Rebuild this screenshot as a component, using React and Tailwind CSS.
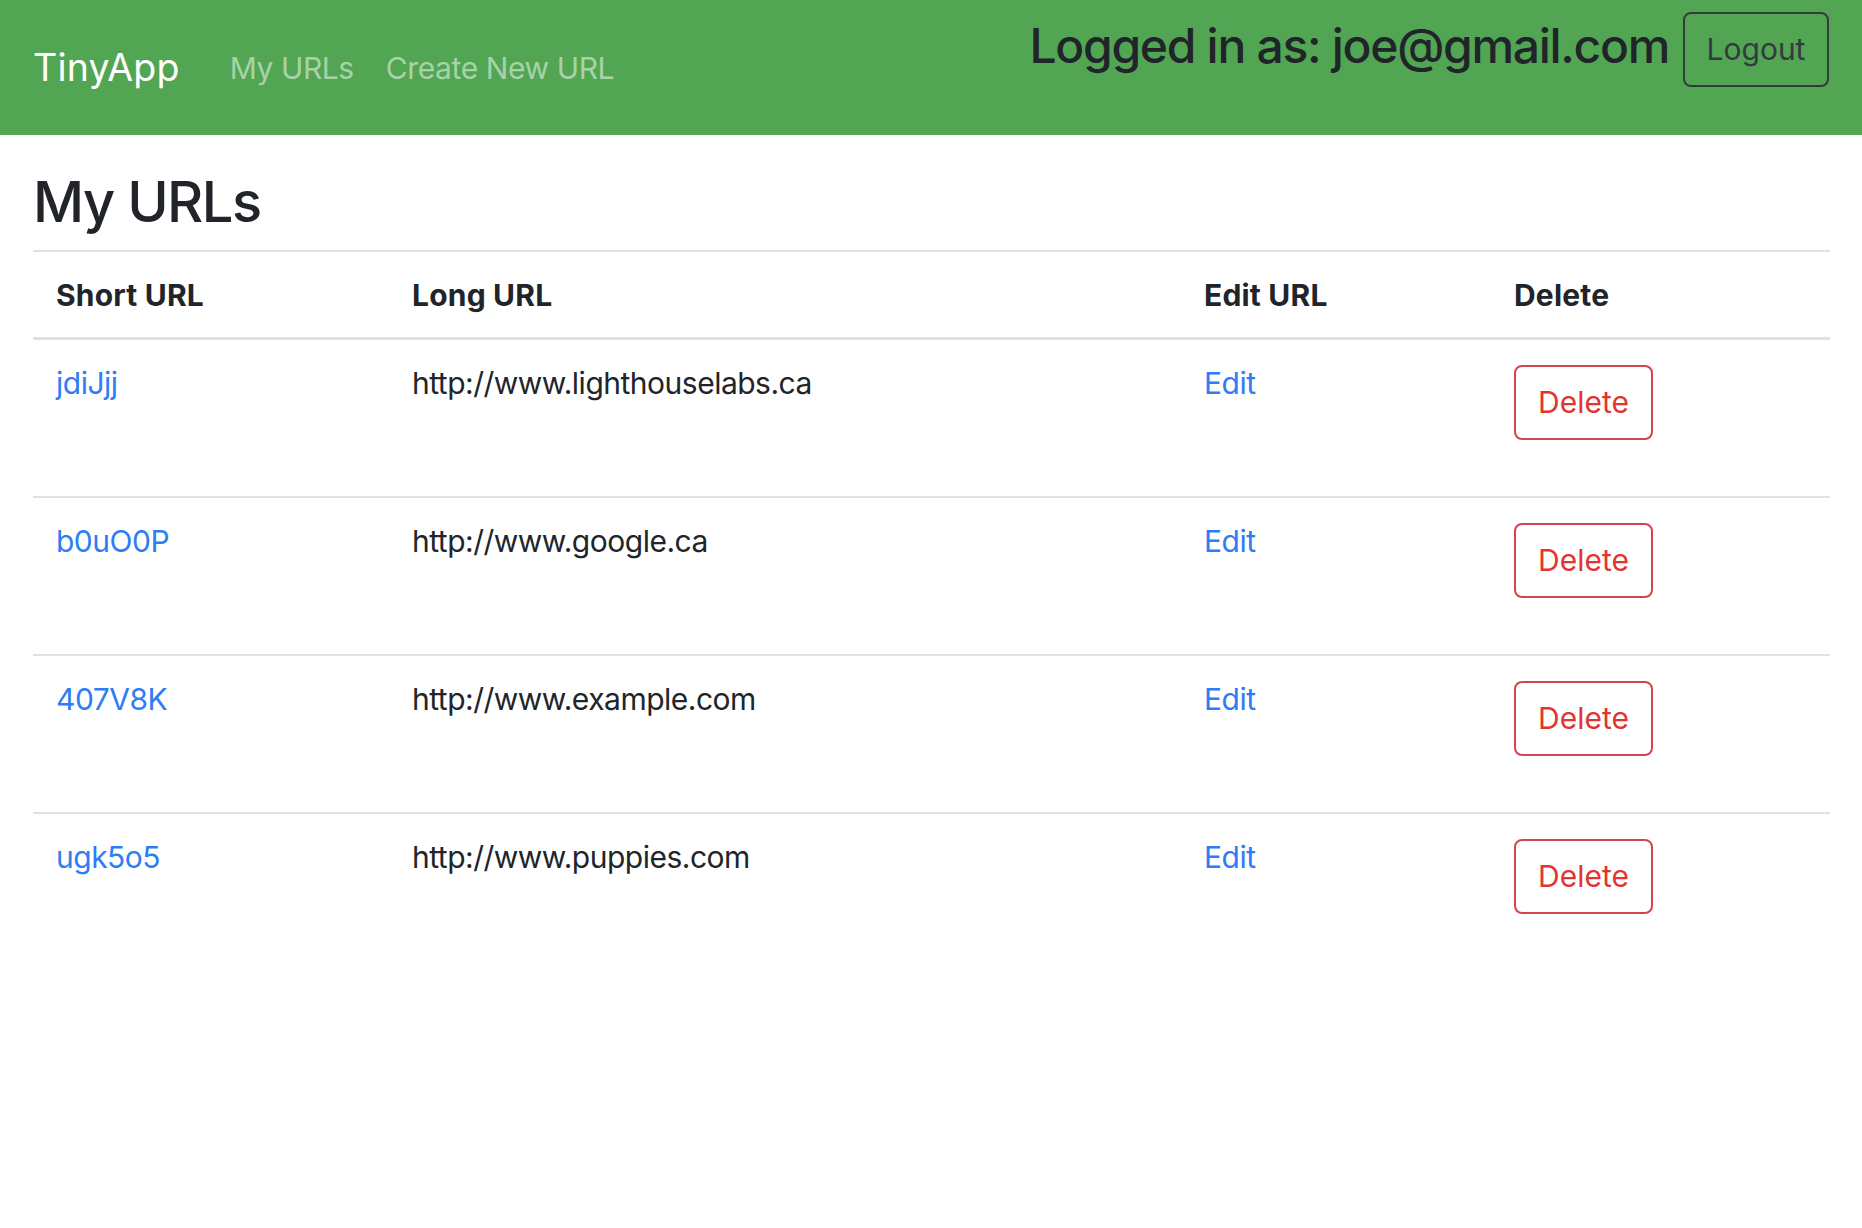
import React from "react";

const rows = [
  { id: "jdiJjj", url: "http://www.lighthouselabs.ca" },
  { id: "b0uO0P", url: "http://www.google.ca" },
  { id: "407V8K", url: "http://www.example.com" },
  { id: "ugk5o5", url: "http://www.puppies.com" },
];

export default function App() {
  return (
    <div
      className="min-h-[1228px] w-[1862px] bg-white text-[#212529]"
      style={{ fontFamily: "Inter, 'Noto Sans', sans-serif" }}
    >
      <nav className="flex h-[135px] items-center bg-[#52a552] pl-[33px] pr-[33px]">
        <a className="text-[37.5px] leading-none tracking-[0.2px] text-white">TinyApp</a>
        <div className="ml-[50px] flex items-center gap-[32px] text-[30px] leading-none tracking-[-0.4px] text-[#a8d3a8]">
          <a>My URLs</a>
          <a>Create New URL</a>
        </div>
        <div className="ml-auto flex items-start gap-[14px] self-start pt-[12px]">
          <h3 className="mt-[5px] text-[48px] font-medium leading-[1.2] tracking-[-1.3px] text-[#212529]">
            Logged in as: joe@gmail.com
          </h3>
          <button className="flex h-[75px] w-[146px] items-center justify-center rounded-[8px] border-2 border-[#343a40] text-[30px] text-[#343a40]">
            Logout
          </button>
        </div>
      </nav>

      <main className="pl-[33px] pr-[32px]">
        <h1 className="pt-[34px] text-[56px] font-medium leading-[1.2] tracking-[-1.5px]">My URLs</h1>
        <div className="mt-[14px] w-[1797px] text-[30px] leading-[1.5]">
          <div className="grid h-[90px] grid-cols-[356px_792px_310px_1fr] items-center border-t-2 border-b-[3px] border-[#dee2e6] pt-[1px] font-bold">
            <div className="pl-[23px] tracking-[0.2px]">Short URL</div>
            <div className="pl-[23px] tracking-[0.2px]">Long URL</div>
            <div className="pl-[23px] tracking-[0.2px]">Edit URL</div>
            <div className="pl-[23px] tracking-[0.2px]">Delete</div>
          </div>
          {rows.map((r, i) => (
            <div
              key={r.id}
              className={
                "grid grid-cols-[356px_792px_310px_1fr] items-start tracking-[-0.5px] " +
                (i > 0 ? "h-[158px] border-t-2 border-[#dee2e6]" : "h-[156px]")
              }
            >
              <div className="pl-[23px] pt-[21px]">
                <a className="text-[#2e7cf6]">{r.id}</a>
              </div>
              <div className="pl-[23px] pt-[21px]">{r.url}</div>
              <div className="pl-[23px] pt-[21px]">
                <a className="text-[#2e7cf6]">Edit</a>
              </div>
              <div className="pl-[23px] pt-[25px]">
                <button className="flex h-[75px] w-[139px] items-center justify-center rounded-[8px] border-2 border-[#d3444c] text-[30px] tracking-normal text-[#e3342f]">
                  Delete
                </button>
              </div>
            </div>
          ))}
        </div>
      </main>
    </div>
  );
}
